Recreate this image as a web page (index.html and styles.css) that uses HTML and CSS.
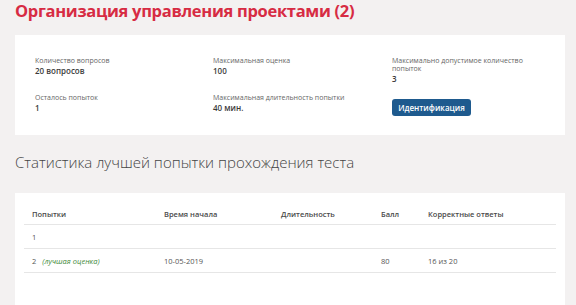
FILE: index.html
```html
<!DOCTYPE html>
<html lang="ru">
<head>
  <meta charset="UTF-8">
  <title>Организация управления проектами</title>
  <link rel="stylesheet" href="styles.css">
</head>
<body>
  <div class="page">
    <h1 class="title">Организация управления проектами (2)</h1>

    <div class="card info">
      <div class="info-item">
        <div class="label">Количество вопросов</div>
        <div class="value">20 вопросов</div>
      </div>
      <div class="info-item">
        <div class="label">Максимальная оценка</div>
        <div class="value">100</div>
      </div>
      <div class="info-item">
        <div class="label">Максимально допустимое количество попыток</div>
        <div class="value">3</div>
      </div>
      <div class="info-item">
        <div class="label">Осталось попыток</div>
        <div class="value">1</div>
      </div>
      <div class="info-item">
        <div class="label">Максимальная длительность попытки</div>
        <div class="value">40 мин.</div>
      </div>
      <div class="info-item">
        <button class="btn">Идентификация</button>
      </div>
    </div>

    <h2 class="subtitle">Статистика лучшей попытки прохождения теста</h2>

    <div class="card stats">
      <table class="attempts">
        <thead>
          <tr>
            <th class="col-try">Попытки</th>
            <th class="col-start">Время начала</th>
            <th class="col-dur">Длительность</th>
            <th class="col-score">Балл</th>
            <th>Корректные ответы</th>
          </tr>
        </thead>
        <tbody>
          <tr>
            <td>1</td>
            <td></td>
            <td></td>
            <td></td>
            <td></td>
          </tr>
          <tr>
            <td>2 <em class="best">(лучшая оценка)</em></td>
            <td>10-05-2019</td>
            <td></td>
            <td>80</td>
            <td>16 из 20</td>
          </tr>
        </tbody>
      </table>
    </div>
  </div>
</body>
</html>
```

FILE: styles.css
```css
html,
body {
  height: 100%;
  overflow: hidden;
}

body {
  margin: 0;
  background: #f3f1f1;
  font-family: "Open Sans", "Noto Sans", sans-serif;
  color: #333;
}

.page {
  padding: 0 11px 0 15px;
}

.title {
  margin: 0;
  font-size: 16.5px;
  line-height: 22px;
  font-weight: 700;
  color: #d72b43;
  letter-spacing: -0.3px;
}

.card {
  background: #fff;
}

.info {
  margin-top: 13px;
  display: grid;
  grid-template-columns: 178px 179px 150px;
  row-gap: 10px;
  padding: 22px 20px 19px 20px;
}

.label {
  font-size: 7px;
  line-height: 8px;
  color: #666;
}

.value {
  font-size: 8px;
  line-height: 11px;
  font-weight: 600;
  color: #3a3a3a;
}

.btn {
  margin-top: 0;
  width: 79px;
  height: 17px;
  padding: 0;
  border: none;
  border-radius: 3px;
  background: #1e5a8e;
  color: #fff;
  font: 600 8px "Open Sans", sans-serif;
}

.subtitle {
  margin: 17px 0 0;
  font-size: 15px;
  line-height: 20px;
  font-weight: 300;
  color: #444;
}

.stats {
  margin-top: 21px;
  padding: 10px 9px 40px 9px;
}

.attempts {
  width: 100%;
  border-collapse: collapse;
  font-size: 7.5px;
  color: #555;
}

.attempts th {
  text-align: left;
  font-weight: 600;
  color: #4a4a4a;
  height: 21px;
  padding: 0 0 0 8px;
  border-bottom: 1px solid #e6e6e6;
}

.attempts td {
  height: 23px;
  padding: 0 0 0 8px;
  border-bottom: 1px solid #e6e6e6;
}

.col-try {
  width: 124px;
}

.col-start {
  width: 109px;
}

.col-dur {
  width: 92px;
}

.col-score {
  width: 39px;
}

.best {
  margin-left: 4px;
  color: #3f8a3a;
}
```
